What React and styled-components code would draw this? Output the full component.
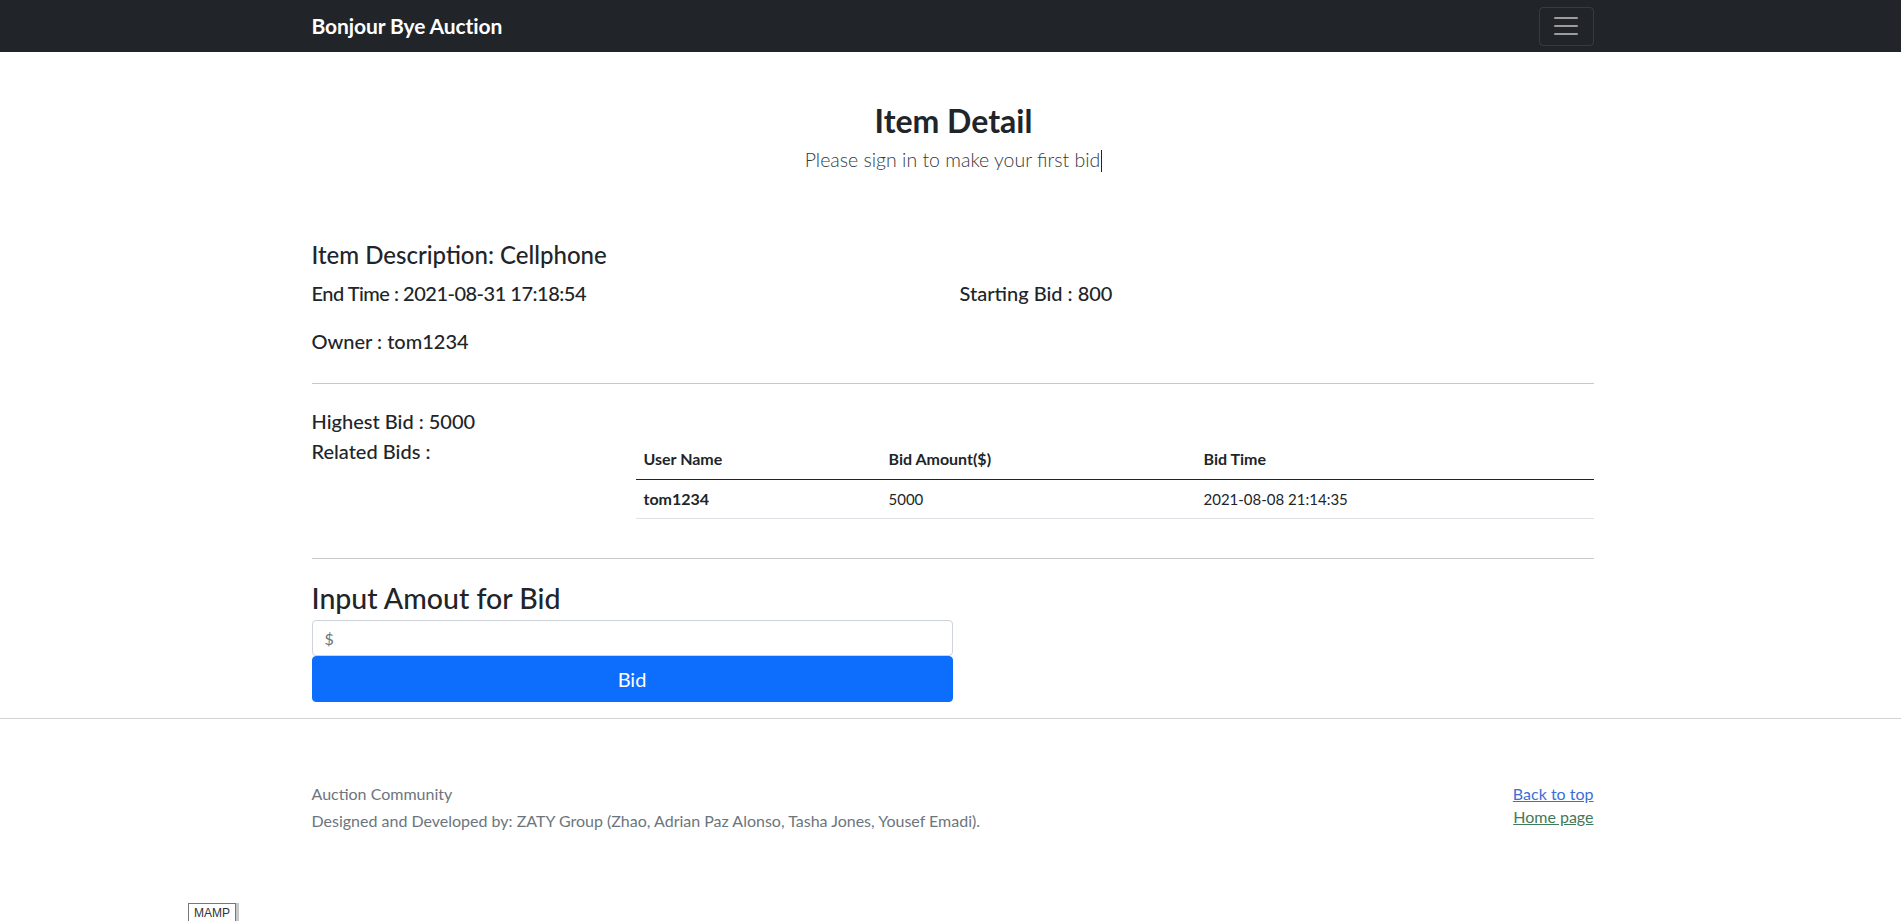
import React from 'react';
import styled, { createGlobalStyle } from 'styled-components';

const GlobalStyle = createGlobalStyle`
  * {
    box-sizing: border-box;
  }
  body {
    margin: 0;
    font-family: Lato, "Open Sans", sans-serif;
    color: #212529;
    background: #fff;
  }
`;

const bids = [{ user: 'tom1234', amount: 5000, time: '2021-08-08 21:14:35' }];

export default function App() {
  return (
    <>
      <GlobalStyle />
      <NavBar>
        <Container>
          <NavInner>
            <Brand>Bonjour Bye Auction</Brand>
            <Toggler aria-label="menu">
              <svg width="30" height="30" viewBox="0 0 30 30">
                <path
                  d="M4 7h22M4 15h22M4 23h22"
                  stroke="rgba(255,255,255,0.55)"
                  strokeWidth="2"
                  strokeLinecap="round"
                />
              </svg>
            </Toggler>
          </NavInner>
        </Container>
      </NavBar>

      <Main>
        <Container>
          <Header>
            <Title>Item Detail</Title>
            <Lead>
              Please sign in to make your first bid
              <Caret />
            </Lead>
          </Header>

          <SectionTitle $top={66}>Item Description: Cellphone</SectionTitle>
          <InfoGrid>
            <Info $digits>End Time : 2021-08-31 17:18:54</Info>
            <Info>Starting Bid : 800</Info>
          </InfoGrid>
          <Info $top={24}>Owner : tom1234</Info>

          <Divider $top={30} $bottom={25} />

          <Info>Highest Bid : 5000</Info>
          <BidsRow>
            <Info>Related Bids :</Info>
            <Table>
              <colgroup>
                <col style={{ width: '245px' }} />
                <col style={{ width: '315px' }} />
                <col />
              </colgroup>
              <thead>
                <tr>
                  <Th>User Name</Th>
                  <Th>Bid Amount($)</Th>
                  <Th>Bid Time</Th>
                </tr>
              </thead>
              <tbody>
                {bids.map(bid => (
                  <tr key={bid.time}>
                    <Td $bold>{bid.user}</Td>
                    <Td>{bid.amount}</Td>
                    <Td>{bid.time}</Td>
                  </tr>
                ))}
              </tbody>
            </Table>
          </BidsRow>

          <Divider $top={39} $bottom={22} />

          <FormTitle>Input Amout for Bid</FormTitle>
          <BidForm>
            <AmountInput placeholder="$" />
            <BidButton>Bid</BidButton>
          </BidForm>
        </Container>
      </Main>

      <Footer>
        <Container>
          <FooterInner>
            <div>
              <FooterText>Auction Community</FooterText>
              <FooterText>
                Designed and Developed by: ZATY Group (Zhao, Adrian Paz Alonso, Tasha Jones, Yousef
                Emadi).
              </FooterText>
            </div>
            <FooterLinks>
              <FooterLink href="#top">Back to top</FooterLink>
              <FooterLink href="#home" $visited>
                Home page
              </FooterLink>
            </FooterLinks>
          </FooterInner>
        </Container>
      </Footer>

      <MampBadge>MAMP</MampBadge>
    </>
  );
}

const Container = styled.div`
  width: 1282px;
  margin-left: calc(50% - 639px);
`;

const NavBar = styled.nav`
  height: 52px;
  background-color: #212529;
`;

const NavInner = styled.div`
  height: 52px;
  display: flex;
  justify-content: space-between;
  align-items: center;
`;

const Brand = styled.a`
  color: #fff;
  font-size: 21px;
  font-weight: 700;
  letter-spacing: -0.1px;
  padding-bottom: 2px;
`;

const Toggler = styled.button`
  width: 55px;
  height: 39px;
  display: flex;
  align-items: center;
  justify-content: center;
  background: transparent;
  border: 1px solid rgba(255, 255, 255, 0.1);
  border-radius: 4px;
  padding: 0;
`;

const Main = styled.main`
  padding-top: 49px;
  padding-bottom: 16px;
`;

const Header = styled.div`
  text-align: center;
  margin-left: 2px;
`;

const Title = styled.h1`
  margin: 0 0 5px;
  font-size: 32px;
  line-height: 40px;
  font-weight: 700;
`;

const Lead = styled.p`
  margin: 0;
  font-size: 19.5px;
  line-height: 28px;
  font-weight: 300;
  color: #343a40;
`;

const Caret = styled.span`
  display: inline-block;
  width: 1px;
  height: 22px;
  margin-left: 1px;
  vertical-align: -5px;
  background: #212529;
`;

const SectionTitle = styled.h4`
  margin: ${p => p.$top || 0}px 0 0;
  font-size: 24px;
  line-height: 30px;
  font-weight: 500;
`;

const FormTitle = styled.h3`
  margin: 0;
  font-size: 28.5px;
  line-height: 34px;
  font-weight: 500;
`;

const InfoGrid = styled.div`
  display: grid;
  grid-template-columns: 1fr 1fr;
  column-gap: 14px;
  margin-top: 11px;
`;

const Info = styled.h5`
  margin: ${p => p.$top || 0}px 0 0;
  font-size: 20px;
  line-height: 24px;
  font-weight: 500;
  letter-spacing: ${p => (p.$digits ? '-0.5px' : '0')};
`;

const Divider = styled.hr`
  margin: ${p => p.$top}px 0 ${p => p.$bottom}px;
  border: 0;
  border-top: 1px solid #c8c9ca;
`;

const BidsRow = styled.div`
  display: grid;
  grid-template-columns: 324px 1fr;
  margin-top: 6px;
`;

const Table = styled.table`
  width: 958px;
  border-collapse: collapse;
  table-layout: fixed;
`;

const Th = styled.th`
  text-align: left;
  padding: 8px;
  font-size: 16px;
  line-height: 24px;
  font-weight: 700;
  border-bottom: 1px solid #212529;
`;

const Td = styled.td`
  padding: 7px 8px;
  font-size: ${p => (p.$bold ? '16px' : '15px')};
  line-height: 24px;
  font-weight: ${p => (p.$bold ? 700 : 400)};
  border-bottom: 1px solid #dee2e6;
`;

const BidForm = styled.div`
  width: 641px;
  margin-top: 5px;
  display: flex;
  flex-direction: column;
`;

const AmountInput = styled.input`
  height: 36px;
  padding: 0 12px;
  font-family: inherit;
  font-size: 16px;
  color: #212529;
  border: 1px solid #ced4da;
  border-radius: 4px;
  outline: none;
  &::placeholder {
    color: #6c757d;
  }
`;

const BidButton = styled.button`
  height: 46px;
  font-family: inherit;
  font-size: 20px;
  color: #fff;
  background-color: #0d6efd;
  border: 1px solid #0d6efd;
  border-radius: 4px;
`;

const Footer = styled.footer`
  border-top: 1px solid #d0d2d4;
  padding-top: 63px;
`;

const FooterInner = styled.div`
  display: flex;
  justify-content: space-between;
  align-items: flex-start;
`;

const FooterText = styled.p`
  margin: 0 0 3px;
  font-size: 16px;
  line-height: 24px;
  color: #6c757d;
`;

const FooterLinks = styled.div`
  display: flex;
  flex-direction: column;
  align-items: flex-end;
`;

const FooterLink = styled.a`
  font-size: 16px;
  line-height: 23px;
  color: ${p => (p.$visited ? '#3f7a5a' : '#3a6fd8')};
  text-decoration: underline;
`;

const MampBadge = styled.div`
  display: inline-block;
  margin: 67px 0 0 188px;
  padding: 1px 5px 0;
  font-family: "Liberation Sans", sans-serif;
  font-size: 12px;
  line-height: 16px;
  color: #333;
  border: 1px solid #777;
  border-bottom: 0;
  background: #fff;
  box-shadow: 3px 0 0 #c8c8c8;
`;
